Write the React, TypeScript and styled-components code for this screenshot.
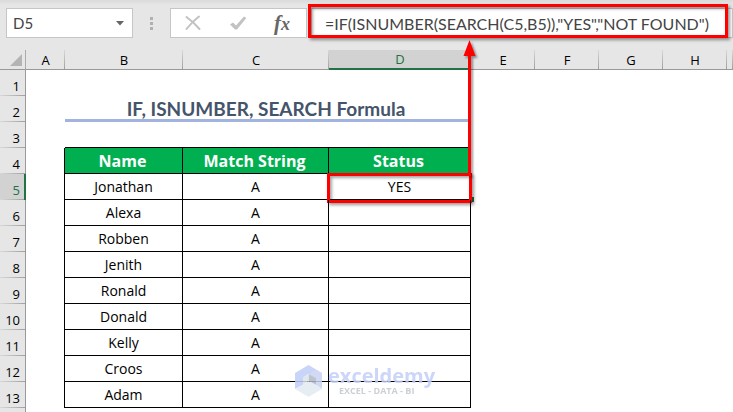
import React from 'react';
import styled, { createGlobalStyle, css } from 'styled-components';

const GlobalStyle = createGlobalStyle`
  *, *::before, *::after { box-sizing: border-box; }
  body { margin: 0; background: #fff; overflow: hidden; }
  button, input { font: inherit; color: inherit; }
`;

const calibri = '"Lato", "Liberation Sans", sans-serif';
const segoe = '"Open Sans", "Noto Sans", sans-serif';

const Workbook = styled.main`
  position: relative;
  height: 100vh;
  overflow: hidden;
  font-family: ${segoe};
  color: #000;
`;

const FormulaBar = styled.header`
  display: flex;
  align-items: flex-start;
  height: 50px;
  padding: 8px 0 0 6px;
  background: linear-gradient(#dadada, #e6e6e6 5px);
  font-family: ${calibri};
  color: #444;
`;

const box = css`
  height: 30px;
  background: #fff;
  border: 1px solid #c6c6c6;
`;

const NameBox = styled.div`
  ${box}
  display: flex;
  align-items: center;
  flex: 0 0 127px;
  min-width: 0;
  padding: 0 4px 0 6px;
`;

const NameInput = styled.input`
  flex: 1;
  width: 100%;
  min-width: 0;
  padding: 0;
  border: 0;
  outline: 0;
  background: none;
  font-size: 15px;
`;

const IconButton = styled.button`
  display: flex;
  flex-shrink: 0;
  align-items: center;
  justify-content: center;
  width: 16px;
  height: 28px;
  padding: 0;
  border: 0;
  background: none;
`;

const Grip = styled.div`
  display: grid;
  gap: 2px;
  align-content: center;
  justify-content: center;
  flex: 0 0 37px;
  height: 30px;
`;

const Dot = styled.span`
  width: 3px;
  height: 3px;
  background: #b0b0b0;
`;

const Actions = styled.div`
  ${box}
  display: flex;
  flex: 0 0 137px;
  justify-content: space-between;
  padding: 0 14px 0 12px;
  ${IconButton} { width: 20px; }
`;

const FunctionSign = styled.span`
  font: italic 700 21px/24px "Liberation Serif", serif;
  color: #666;
  small { font-size: 18px; }
`;

const FormulaField = styled.div`
  ${box}
  position: relative;
  flex: 1;
  min-width: 0;
  margin-left: 4px;
`;

const FormulaInput = styled.input`
  display: block;
  width: 100%;
  height: 28px;
  padding: 0 4px 0 13px;
  border: 0;
  outline: 0;
  background: none;
  font-size: 16px;
`;

const redFrame = css`
  position: absolute;
  border: 3px solid #f00;
  pointer-events: none;
  box-shadow: 2px 2px 3px rgba(0, 0, 0, 0.4), inset 2px 2px 3px rgba(0, 0, 0, 0.35);
`;

const FormulaFrame = styled.span`
  ${redFrame}
  inset: -5px 4px -1px -4px;
`;

const CellFrame = styled.span`
  ${redFrame}
  inset: -1px -2px -4px -2px;
`;

const FillHandle = styled.span`
  position: absolute;
  right: -4px;
  bottom: -3px;
  width: 5px;
  height: 5px;
  background: #217346;
`;

const Sheet = styled.table`
  width: 100%;
  table-layout: fixed;
  border-collapse: separate;
  border-spacing: 0;
  font-size: 14px;
  line-height: 18px;
`;

const Corner = styled.td`
  height: 20px;
  padding: 0;
  background: #e6e6e6;
  border-right: 1px solid #ababab;
  border-bottom: 1px solid #999;
`;

const ColumnHead = styled.th<{ $active?: boolean }>`
  height: 20px;
  padding: 0;
  font-size: 13px;
  font-weight: 400;
  color: #000;
  background: linear-gradient(#d8d8d8, #a0a0a0) right / 1px 100% no-repeat #e6e6e6;
  border-bottom: 1px solid #999;
  ${p => p.$active && css`
    color: #217346;
    background: #d2d2d2;
    border-bottom: 2px solid #217346;
  `}
`;

const RowHead = styled.th<{ $active?: boolean }>`
  height: 26px;
  padding: 5px 5px 0 0;
  font-size: 13px;
  font-weight: 400;
  text-align: right;
  background: linear-gradient(90deg, #d8d8d8, #a0a0a0) bottom / 100% 1px no-repeat #e6e6e6;
  border-right: 1px solid #999;
  ${p => p.$active && css`
    color: #217346;
    background-color: #d2d2d2;
    border-right: 2px solid #217346;
    padding-right: 4px;
  `}
`;

const Blank = styled.td<{ $line?: 'right' | 'bottom' }>`
  padding: 0;
  ${p => p.$line && `border-${p.$line}: 1px solid #000;`}
`;

const Title = styled.td`
  padding: 2px 4px 0 0;
  border-bottom: 3px solid #a2b4dd;
  font: 700 19px/21px ${calibri};
  color: #44546a;
  text-align: center;
`;

const Cell = styled.td<{ $head?: boolean }>`
  position: relative;
  padding: 0;
  text-align: center;
  border-right: 1px solid #000;
  border-bottom: 1px solid #000;
  ${p => p.$head && css`
    padding-right: 2px;
    background: #00b050;
    color: #fff;
    font-size: 16px;
    font-weight: 700;
  `}
`;

const Arrow = styled.svg`
  position: absolute;
  left: 460px;
  top: 38px;
  pointer-events: none;
  filter: drop-shadow(2px 2px 1px rgba(0, 0, 0, 0.4));
`;

const Watermark = styled.div`
  position: absolute;
  left: 294px;
  top: 365px;
  display: flex;
  align-items: flex-start;
  gap: 5px;
  pointer-events: none;
  opacity: 0.85;
`;

const Brand = styled.div`
  font: 700 20px/21px "Open Sans", sans-serif;
  color: #c3cff8;
`;

const Tagline = styled.div`
  padding-left: 11px;
  font: 700 9px/10px "Open Sans", sans-serif;
  color: #c4c8cd;
`;

const columns = ['A', 'B', 'C', 'D', 'E', 'F', 'G', 'H', ''];
const widths = [26, 39, 118, 146, 142, 64, 64, 64, 64];
const people = ['Jonathan', 'Alexa', 'Robben', 'Jenith', 'Ronald', 'Donald', 'Kelly', 'Croos', 'Adam'];

const Trailing = () => <Blank colSpan={5} />;

export default function App() {
  return (
    <Workbook>
      <GlobalStyle />
      <FormulaBar>
        <NameBox>
          <NameInput aria-label="Name box" defaultValue="D5" />
          <IconButton aria-label="Show names">
            <svg width="8" height="5" viewBox="0 0 8 5"><path d="M0 0h8L4 4.5z" fill="#666" /></svg>
          </IconButton>
        </NameBox>
        <Grip><Dot /><Dot /><Dot /></Grip>
        <Actions>
          <IconButton aria-label="Cancel">
            <svg width="16" height="16" viewBox="0 0 16 16" fill="none" stroke="#c2c2c2" strokeLinecap="round">
              <path d="M1.5 2C5 4.500 11 10 14.500 14" strokeWidth="2" />
              <path d="M14 1.500C10 4.500 5 9.500 1.500 14" strokeWidth="2" />
            </svg>
          </IconButton>
          <IconButton aria-label="Enter">
            <svg width="18" height="16" viewBox="0 0 18 16"><path d="M1 9.500L4 7.500L7 10.500L15 1.500L17.300 3L8 14.500H6z" fill="#c2c2c2" /></svg>
          </IconButton>
          <IconButton aria-label="Insert function">
            <FunctionSign>f<small>x</small></FunctionSign>
          </IconButton>
        </Actions>
        <FormulaField>
          <FormulaInput aria-label="Formula" defaultValue={'=IF(ISNUMBER(SEARCH(C5,B5)),"YES","NOT FOUND")'} />
          <FormulaFrame />
        </FormulaField>
      </FormulaBar>
      <Sheet>
        <colgroup>
          {widths.map((w, i) => <col key={i} width={w} />)}
          <col />
        </colgroup>
        <thead>
          <tr>
            <Corner>
              <svg width="25" height="19" viewBox="0 0 25 19" display="block"><path d="M22 4v12H10z" fill="#b4b4b4" /></svg>
            </Corner>
            {columns.map((c, i) => <ColumnHead key={i} scope="col" $active={c === 'D'}>{c}</ColumnHead>)}
          </tr>
        </thead>
        <tbody>
          <tr><RowHead scope="row">1</RowHead><Blank colSpan={9} /></tr>
          <tr>
            <RowHead scope="row">2</RowHead><Blank />
            <Title colSpan={3}>IF, ISNUMBER, SEARCH Formula</Title><Trailing />
          </tr>
          <tr>
            <RowHead scope="row">3</RowHead><Blank />
            <Blank colSpan={3} $line="bottom" /><Trailing />
          </tr>
          <tr>
            <RowHead scope="row">4</RowHead><Blank $line="right" />
            <Cell $head>Name</Cell><Cell $head>Match String</Cell><Cell $head>Status</Cell><Trailing />
          </tr>
          {people.map((name, i) => (
            <tr key={name}>
              <RowHead scope="row" $active={i === 0}>{i + 5}</RowHead><Blank $line="right" />
              <Cell>{name}</Cell><Cell>A</Cell>
              <Cell>{i === 0 && <>YES<FillHandle /><CellFrame /></>}</Cell><Trailing />
            </tr>
          ))}
          <tr><RowHead /><Blank colSpan={9} /></tr>
        </tbody>
      </Sheet>
      <Arrow width="20" height="138" viewBox="0 0 20 138" fill="#f00">
        <path d="M9.500 2L15.500 18H11V138H8V18H3.500z" />
      </Arrow>
      <Watermark>
        <svg width="29" height="32" viewBox="0 0 29 32">
          <path d="M14.500 0L28 8v8l-13.500-7L9 12.500V20L1 24V8z" fill="#c0cdf8" />
          <path d="M28 8v16l-6-4v-7l-7.500-4 7-4z" fill="#c9d3f2" />
          <path d="M14.500 9L22 13v7l-7.500-4z" fill="#b2bac8" />
          <path d="M9 12.500L14.500 9v7L9 20z" fill="#dde2ea" />
          <path d="M1 24l8-4 5.500-4 7.500 4 6 4-13.500 8z" fill="#e2ebf2" />
        </svg>
        <div>
          <Brand>exceldemy</Brand>
          <Tagline>EXCEL - DATA - BI</Tagline>
        </div>
      </Watermark>
    </Workbook>
  );
}
